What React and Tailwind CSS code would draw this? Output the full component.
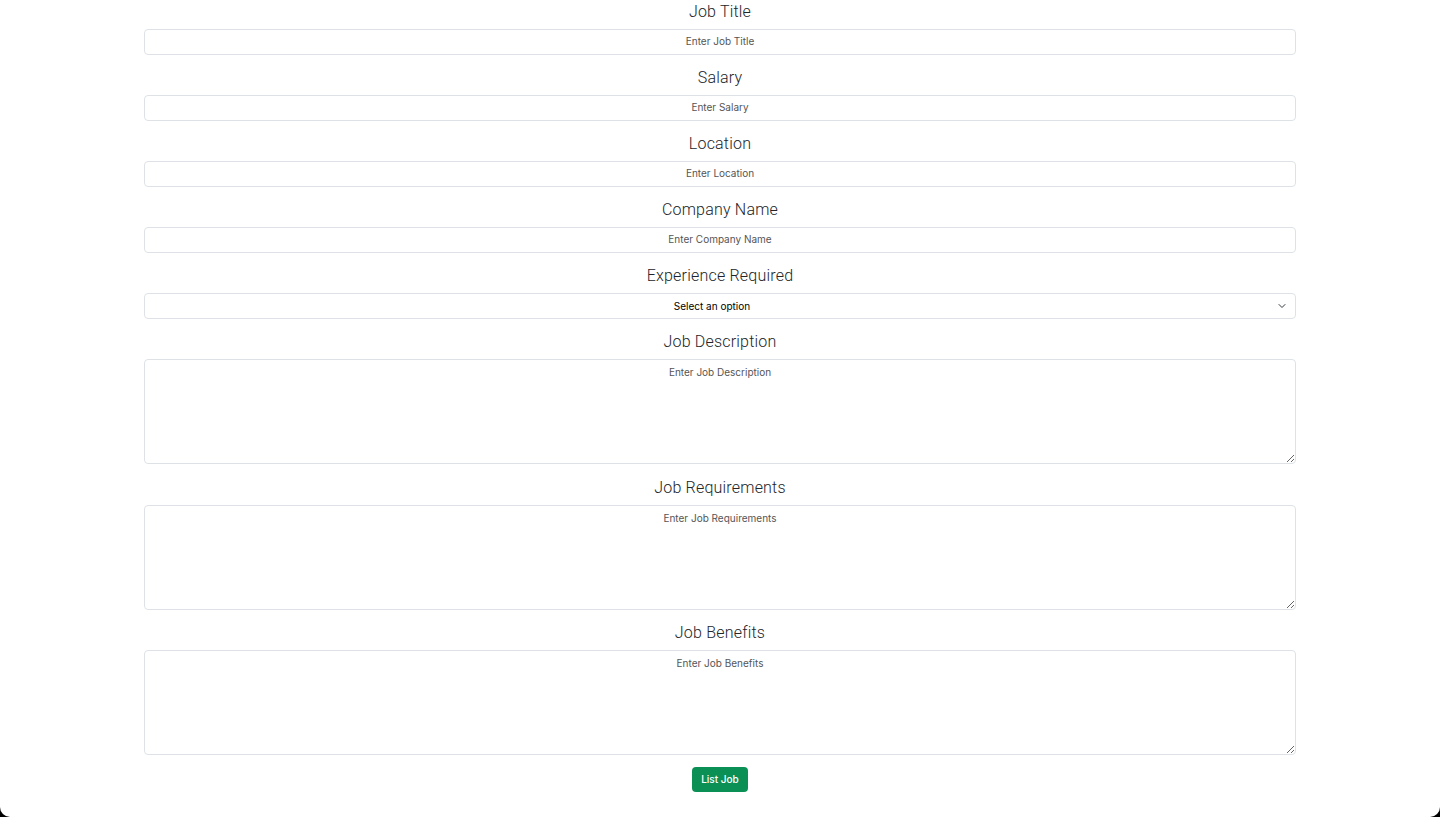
import React from "react";

const labelCls =
  "block h-[24px] leading-[24px] text-center text-[16px] font-light text-[#212529] tracking-[0.2px] [font-family:Roboto,'Liberation_Sans',sans-serif]";
const inputCls =
  "mt-[5px] block w-full h-[26px] rounded-[4px] border border-[#dee2e6] bg-white px-2 pb-[2px] text-center text-[10px] text-[#212529] placeholder:text-[#555] outline-none [font-family:Inter,'Liberation_Sans',sans-serif]";
const areaCls =
  "mt-[5px] block w-full h-[105px] rounded-[4px] border border-[#dee2e6] bg-white px-2 pt-[5px] text-center text-[10px] text-[#212529] placeholder:text-[#555] outline-none resize-y [font-family:Inter,'Liberation_Sans',sans-serif]";

function Field({ label, placeholder }) {
  return (
    <div className="mb-[11px]">
      <label className={labelCls}>{label}</label>
      <input className={inputCls} placeholder={placeholder} />
    </div>
  );
}

function Area({ label, placeholder }) {
  return (
    <div className="mb-[11.5px]">
      <label className={labelCls}>{label}</label>
      <textarea className={areaCls} placeholder={placeholder} />
    </div>
  );
}

export default function App() {
  return (
    <div className="w-[1440px] h-[817px] bg-black overflow-hidden">
      <div className="w-full h-full bg-white rounded-b-[10px]">
        <div className="w-[1152px] mx-auto">
          <Field label="Job Title" placeholder="Enter Job Title" />
          <Field label="Salary" placeholder="Enter Salary" />
          <Field label="Location" placeholder="Enter Location" />
          <Field label="Company Name" placeholder="Enter Company Name" />
          <div className="mb-[11px]">
            <label className={labelCls}>Experience Required</label>
            <div className="relative mt-[5px]">
              <select className="block w-full h-[26px] appearance-none rounded-[4px] border border-[#dee2e6] bg-white pl-[8px] pr-[24px] text-center text-[10px] text-black outline-none [font-family:Inter,'Liberation_Sans',sans-serif]">
                <option>Select an option</option>
              </select>
              <svg
                className="absolute right-[10px] top-[9px] pointer-events-none"
                width="8"
                height="8"
                viewBox="0 0 16 16"
                fill="none"
                stroke="#343a40"
                strokeWidth="2"
                strokeLinecap="round"
                strokeLinejoin="round"
              >
                <path d="M2 5l6 6 6-6" />
              </svg>
            </div>
          </div>
          <Area label="Job Description" placeholder="Enter Job Description" />
          <Area label="Job Requirements" placeholder="Enter Job Requirements" />
          <div>
            <label className={labelCls}>Job Benefits</label>
            <textarea className={areaCls} placeholder="Enter Job Benefits" />
          </div>
          <div className="flex justify-center mt-[12px]">
            <button className="w-[56px] h-[25px] rounded-[4px] bg-[#0a8f55] text-white text-[10px] font-medium [font-family:Inter,'Liberation_Sans',sans-serif]">
              List Job
            </button>
          </div>
        </div>
      </div>
    </div>
  );
}
